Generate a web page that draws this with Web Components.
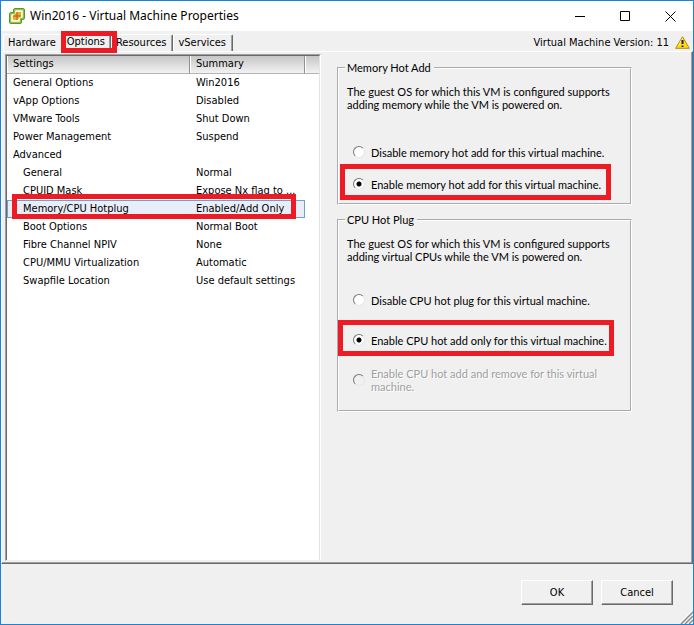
<!DOCTYPE html>
<html lang="en">
<head>
<meta charset="utf-8">
<title>Win2016 - Virtual Machine Properties</title>
<style>
html, body { height: 100%; }
body { margin: 0; font: 11px/14px "DejaVu Sans Condensed", "DejaVu Sans", sans-serif; color: #000; }
</style>
</head>
<body>
<app-window>
  <title-bar slot="title">Win2016 - Virtual Machine Properties</title-bar>
  <tab-strip slot="tabs"></tab-strip>
  <settings-list slot="list"></settings-list>
  <option-group legend="Memory Hot Add">
    <span slot="text">The guest OS for which this VM is configured supports<br>adding memory while the VM is powered on.</span>
    <radio-choice>Disable memory hot add for this virtual machine.</radio-choice>
    <radio-choice checked marked>Enable memory hot add for this virtual machine.</radio-choice>
  </option-group>
  <option-group legend="CPU Hot Plug" roomy>
    <span slot="text">The guest OS for which this VM is configured supports<br>adding virtual CPUs while the VM is powered on.</span>
    <radio-choice>Disable CPU hot plug for this virtual machine.</radio-choice>
    <radio-choice checked marked>Enable CPU hot add only for this virtual machine.</radio-choice>
    <radio-choice disabled>Enable CPU hot add and remove for this virtual<br>machine.</radio-choice>
  </option-group>
  <push-button slot="actions">OK</push-button>
  <push-button slot="actions">Cancel</push-button>
</app-window>
<script>
function define(name, html, setup) {
  const template = document.createElement('template');
  template.innerHTML = html;
  customElements.define(name, class extends HTMLElement {
    connectedCallback() {
      if (this.shadowRoot) return;
      const root = this.attachShadow({ mode: 'open' });
      root.append(template.content.cloneNode(true));
      if (setup) setup(this, root);
    }
  });
}

define('call-out', `
<style>:host { display: block; position: absolute; box-sizing: border-box; border: 5px solid #ed1c24; pointer-events: none; z-index: 2; }</style>`);

define('app-window', `
<style>
:host { display: flex; flex-direction: column; min-height: 100%; box-sizing: border-box; border: 1px solid #1883d7; background: #f0f0f0; }
main { flex: 1; display: grid; grid-template-columns: minmax(0, 316px) minmax(0, 1fr); border: 1px solid; border-color: #fff #696969 #696969 #fff; padding: 2px 1px 2px 3px; box-shadow: inset -1px -1px #a0a0a0; }
section { display: flex; flex-direction: column; gap: 8px; padding: 7px 16px 0; }
footer { position: relative; display: flex; justify-content: flex-end; gap: 8px; padding: 16px 20px 19px; }
.grip { position: absolute; right: 0; bottom: 0; width: 13px; height: 13px; }
</style>
<slot name="title"></slot>
<slot name="tabs"></slot>
<main><slot name="list"></slot><section><slot></slot></section></main>
<footer><slot name="actions"></slot>
<svg class="grip" viewBox="0 0 13 13" aria-hidden="true"><path d="M0 12L12 0M4 13L13 4M8 13l5-5" stroke="#fff"/><path d="M1 13L13 1M5 13l8-8M9 13l4-4" stroke="#8a8a8a" stroke-width="1.500"/></svg>
</footer>`);

define('title-bar', `
<style>
:host { display: flex; align-items: center; height: 30px; background: #fff; padding-left: 8px; }
h1 { flex: 1; margin: 0 0 0 5px; font: 12px/16px "Noto Sans", sans-serif; white-space: nowrap; }
button { width: 45px; height: 30px; padding: 0; border: 0; background: none; display: grid; place-items: center; }
svg { display: block; }
</style>
<svg width="16" height="16" viewBox="0 0 16 16" aria-hidden="true">
  <path d="M6.500 1h7Q15 1 15 2.500v6.500Q15 11 13.500 11H12v2.500Q12 15 10.500 15h-8Q1 15 1 13.500V7Q1 5 2.500 5H5V2.500Q5 1 6.500 1Z" fill="#fff" stroke="#4c8a1c" stroke-width="2"/>
  <path d="M6.500 1.500h7Q14.500 1.500 14.500 2.500v6.500Q14.500 10.500 13.500 10.500H11.500v3Q11.500 14.500 10.500 14.500h-8Q1.500 14.500 1.500 13.500V7Q1.500 5.500 2.500 5.500H5.500V2.500Q5.500 1.500 6.500 1.500Z" fill="none" stroke="#8cc63f" stroke-width="1.500"/>
  <path d="M7.500 3.500h5v4L8.500 12.500h-5v-4Z" fill="#ffe9b8"/>
  <path d="M8 4h4v4L8 12H4V8Z" fill="#f2a82a"/>
  <path d="M8 4v4h4M4 8h4v4" fill="none" stroke="#b0600e"/>
</svg>
<h1><slot></slot></h1>
<button aria-label="Minimize"><svg width="11" height="11"><path d="M0 5.500h10" stroke="#000"/></svg></button>
<button aria-label="Maximize"><svg width="11" height="11"><path d="M.5.5h9v9h-9z" fill="none" stroke="#000"/></svg></button>
<button aria-label="Close"><svg width="11" height="11"><path d="M.5.5l10 10M10.500.5l-10 10" stroke="#000"/></svg></button>`);

define('tab-strip', `
<style>
:host { display: flex; align-items: flex-end; height: 20px; padding-left: 2px; }
button { position: relative; font: inherit; color: inherit; height: 17px; padding: 0 6px 0 4px; border: solid; border-width: 1px 1px 0 1px; border-color: #fff #696969 #fff #fff; border-radius: 2px 2px 0 0; background: #f0f0f0; box-shadow: inset -1px 0 #a0a0a0; }
button.first { border-right-color: #f0f0f0; box-shadow: none; padding-right: 5px; }
button[aria-selected=true] { height: 20px; padding: 0 5px 0 4px; }
nav { display: flex; align-items: flex-end; }
call-out { inset: -1px -7px -2px -2px; }
.version { flex: 1; display: flex; justify-content: flex-end; align-items: center; gap: 6px; height: 17px; padding: 0 3px 0 0; }
</style>
<nav role="tablist">
<button role="tab" class="first">Hardware</button>
<button role="tab" aria-selected="true">Options<call-out></call-out></button>
<button role="tab">Resources</button>
<button role="tab">vServices</button>
</nav>
<div class="version"><span>Virtual Machine Version: 11</span>
<svg width="15" height="13" viewBox="0 0 15 13" role="img" aria-label="Warning"><path d="M7.500.7L14.300 12.300H.7Z" fill="#ffdc0a" stroke="#b5871a" stroke-linejoin="round"/><path d="M7.500 2.500L4 9" stroke="#fff2a0"/><path d="M7.500 4v4M7.500 9.500v1.500" stroke="#222" stroke-width="2"/></svg>
</div>`);

const settings = [
  ['General Options', 'Win2016'], ['vApp Options', 'Disabled'], ['VMware Tools', 'Shut Down'],
  ['Power Management', 'Suspend'], ['Advanced', ''], ['General', 'Normal', 'sub'],
  ['CPUID Mask', 'Expose Nx flag to ...', 'sub'], ['Memory/CPU Hotplug', 'Enabled/Add Only', 'sub selected'],
  ['Boot Options', 'Normal Boot', 'sub'], ['Fibre Channel NPIV', 'None', 'sub'],
  ['CPU/MMU Virtualization', 'Automatic', 'sub'], ['Swapfile Location', 'Use default settings', 'sub']
];
define('settings-list', `
<style>
:host { display: block; box-sizing: border-box; background: #fff; border: 1px solid; border-color: #a0a0a0 #fff #f0f0f0 #a0a0a0; }
.inner { box-sizing: border-box; height: 100%; border: solid; border-width: 1px 1px 0 1px; border-color: #696969 #e3e3e3 #e3e3e3 #696969; }
table { width: 100%; border-collapse: separate; border-spacing: 0; table-layout: fixed; }
th, td { box-sizing: border-box; height: 18px; padding: 0 0 0 6px; text-align: left; font-weight: normal; line-height: 14px; white-space: nowrap; }
th { padding-bottom: 1px; background: linear-gradient(#c6c6c6, #f2f2f2); border-right: 1px solid #909090; border-bottom: 1px solid #b4b4b4; box-shadow: inset 1px 0 #fff; }
th:last-child { border-right: 0; }
.name { width: 183px; } .end { width: 14px; }
.sub td:first-child { padding-left: 16px; }
.selected { position: relative; }
.selected td:not(:last-child) { border: solid #6f9fcb; border-width: 1px 0; background: #e8eef7; }
.selected td:nth-child(2) { border-right-width: 1px; }
.selected td:first-child { border-left-width: 1px; padding-left: 15px; }
call-out { inset: -6px 23px -1px 5px; }
</style>
<div class="inner"><table><thead><tr><th class="name">Settings</th><th>Summary</th><th class="end" aria-label="Filler"></th></tr></thead><tbody></tbody></table></div>`,
(host, root) => {
  const body = root.querySelector('tbody');
  for (const [name, summary, cls] of settings) {
    const row = body.insertRow();
    if (cls) row.className = cls;
    row.insertCell().textContent = name;
    row.insertCell().textContent = summary;
    const end = row.insertCell();
    if (row.classList.contains('selected')) end.append(document.createElement('call-out'));
  }
});

define('option-group', `
<style>
:host { display: block; max-width: 295px; font-family: Lato, sans-serif; --choice-height: 14px; --mark-left: -13px; --mark-right: 11px; }
:host([roomy]) { --choice-height: 28px; --mark-left: -15px; --mark-right: 8px; }
fieldset { display: block; margin: 0; min-width: 0; border: 2px groove #fff; padding: 10px 8px 12px; }
:host([roomy]) fieldset { padding-bottom: 16px; }
legend { padding: 0 3px 0 2px; margin-left: -2px; line-height: 14px; }
p { margin: 0 0 34px; line-height: 13px; }
:host([roomy]) p { margin-bottom: 23px; }
.choices { display: grid; gap: 18px; padding-left: 6px; }
:host([roomy]) .choices { gap: 12px; }
</style>
<fieldset><legend></legend><p><slot name="text"></slot></p><div class="choices"><slot></slot></div></fieldset>`,
(host, root) => { root.querySelector('legend').textContent = host.getAttribute('legend'); });

define('radio-choice', `
<style>
:host { display: block; position: relative; }
label { display: flex; align-items: center; gap: 6px; line-height: 13px; min-height: var(--choice-height); white-space: nowrap; }
input { appearance: none; flex: none; width: 12px; height: 12px; margin: 0; border: 1px solid; border-color: #777 #e6e6e6 #e6e6e6 #777; border-radius: 50%; background: #fff; }
input:checked { background: radial-gradient(circle, #000 2px, #fff 3px); }
input:disabled { background: #f0f0f0; }
:host([disabled]) label { color: #a0a0a0; text-shadow: 1px 1px #fff; }
call-out { top: 50%; height: 36px; margin-top: -20px; left: var(--mark-left); right: var(--mark-right); }
</style>
<label><input type="radio"><span><slot></slot></span></label>`,
(host, root) => {
  const input = root.querySelector('input');
  input.checked = host.hasAttribute('checked');
  input.disabled = host.hasAttribute('disabled');
  if (host.hasAttribute('marked')) root.append(document.createElement('call-out'));
});

define('push-button', `
<style>
:host { display: block; }
button { display: block; width: 72px; height: 25px; padding: 0; font: inherit; color: inherit; background: #f0f0f0; border: 1px solid; border-color: #fff #696969 #696969 #fff; box-shadow: inset -1px -1px #a0a0a0; }
</style>
<button type="button"><slot></slot></button>`);
</script>
</body>
</html>
